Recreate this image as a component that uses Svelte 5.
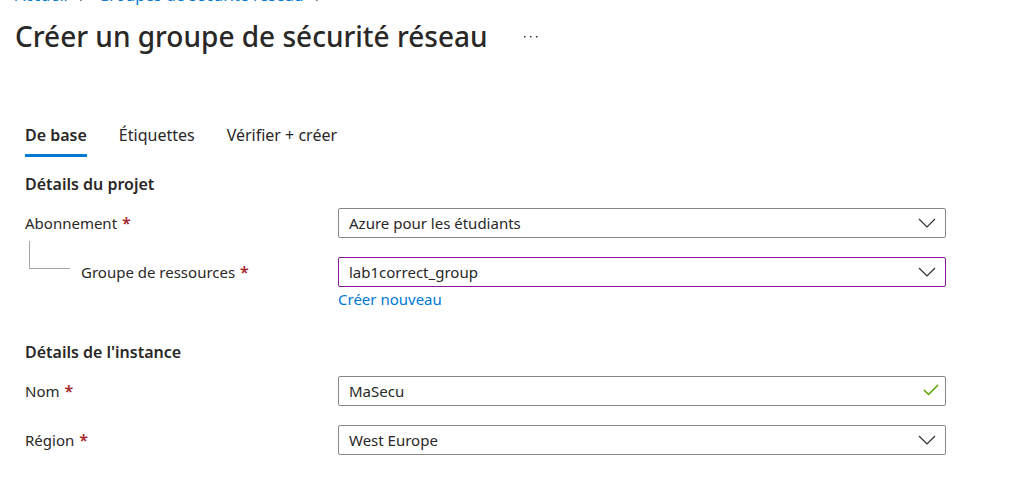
<script>
  let subscription = $state('Azure pour les étudiants');
  let group = $state('lab1correct_group');
  let name = $state('MaSecu');
  let region = $state('West Europe');
  let active = $state(0);
  const tabs = ['De base', 'Étiquettes', 'Vérifier + créer'];
</script>

{#snippet chevron()}
  <svg class="chevron" viewBox="0 0 18 10" width="18" height="10" aria-hidden="true">
    <path d="M1 1 L9 9 L17 1" />
  </svg>
{/snippet}

<main>
  <nav class="crumbs">
    <a href="#accueil">Accueil</a><span>/</span><a href="#groupes">Groupes de sécurité réseau</a><span>/</span>
  </nav>

  <header>
    <h1>Créer un groupe de sécurité réseau</h1>
    <button class="more" type="button" aria-label="Plus">
      <svg viewBox="0 0 16 4" width="16" height="4" aria-hidden="true">
        <rect x="1" y="1" width="1.5" height="1.5" /><rect x="7" y="1" width="1.5" height="1.5" /><rect x="13" y="1" width="1.5" height="1.5" />
      </svg>
    </button>
  </header>

  <div class="tabs" role="tablist">
    {#each tabs as tab, i}
      <button type="button" role="tab" aria-selected={active === i} class:active={active === i} onclick={() => (active = i)}>{tab}</button>
    {/each}
  </div>

  <form>
    <section>
      <h2>Détails du projet</h2>
      <div class="row">
        <label for="subscription">Abonnement <span class="req">*</span></label>
        <div class="field">
          <select id="subscription" bind:value={subscription}><option>Azure pour les étudiants</option></select>
          {@render chevron()}
        </div>
      </div>
      <div class="row">
        <div class="child">
          <span class="branch"></span>
          <label for="group">Groupe de ressources <span class="req">*</span></label>
        </div>
        <div class="field">
          <select id="group" class="changed" bind:value={group}><option>lab1correct_group</option></select>
          {@render chevron()}
        </div>
        <a class="create" href="#nouveau">Créer nouveau</a>
      </div>
    </section>

    <section>
      <h2>Détails de l'instance</h2>
      <div class="row">
        <label for="name">Nom <span class="req">*</span></label>
        <div class="field">
          <input id="name" type="text" bind:value={name} />
          <svg class="check" viewBox="0 0 16 12" width="16" height="12" aria-hidden="true">
            <path d="M1 6 L5.5 10.5 L15 1" />
          </svg>
        </div>
      </div>
      <div class="row">
        <label for="region">Région <span class="req">*</span></label>
        <div class="field">
          <select id="region" bind:value={region}><option>West Europe</option></select>
          {@render chevron()}
        </div>
      </div>
    </section>
  </form>
</main>

<style>
  :global(body) {
    margin: 0;
    background: #fff;
  }
  main {
    font-family: "Segoe UI", "Noto Sans", "Open Sans", sans-serif;
    font-size: 15px;
    line-height: 20px;
    color: #292827;
  }
  a {
    color: #0078d4;
    text-decoration: none;
  }
  .crumbs {
    display: flex;
    align-items: flex-end;
    gap: 12px;
    height: 5px;
    padding-left: 15px;
    overflow: hidden;
    font-size: 16px;
    color: #605e5c;
  }
  header {
    display: flex;
    align-items: center;
    gap: 35px;
    height: 64px;
    padding: 0 15px;
    box-sizing: border-box;
  }
  h1 {
    margin: 0;
    padding-bottom: 2px;
    font-size: 28px;
    line-height: 40px;
    font-weight: 500;
  }
  button {
    border: 0;
    padding: 0;
    background: none;
    font: inherit;
    color: inherit;
    cursor: pointer;
  }
  .more {
    display: flex;
  }
  .more rect {
    fill: #323130;
  }
  .tabs {
    display: flex;
    gap: 32px;
    margin-top: 54px;
    padding: 0 25px;
  }
  .tabs button {
    height: 34px;
    padding-bottom: 8px;
    border-bottom: 3px solid transparent;
    font-size: 16px;
    line-height: 20px;
    white-space: nowrap;
  }
  .tabs .active {
    border-color: #0078d4;
    font-weight: 600;
  }
  form {
    padding: 16px 66px 24px 25px;
  }
  section {
    display: flex;
    flex-direction: column;
    gap: 19px;
  }
  section + section {
    margin-top: 32px;
  }
  h2 {
    margin: 0 0 -6px;
    font-size: 16px;
    line-height: 22px;
    font-weight: 600;
  }
  .row {
    display: grid;
    grid-template-columns: 313px minmax(0, 1fr);
    align-items: center;
  }
  .req {
    margin-left: 1px;
    color: #a4262c;
    font-size: 16px;
    line-height: 16px;
    font-weight: 600;
  }
  .child {
    display: flex;
    align-items: center;
    gap: 11px;
    padding-left: 4px;
  }
  .branch {
    width: 40px;
    height: 27px;
    margin-top: -34px;
    border: solid #a6a6a6;
    border-width: 0 0 1px 1px;
  }
  .field {
    display: grid;
    align-items: center;
  }
  .field > * {
    grid-area: 1 / 1;
  }
  select,
  input {
    appearance: none;
    box-sizing: border-box;
    width: 100%;
    height: 30px;
    margin: 0;
    padding: 0 40px 0 10px;
    border: 1px solid #8a8886;
    border-radius: 2px;
    outline: 0;
    background: #fff;
    font: inherit;
    color: inherit;
  }
  .changed {
    border-color: #881798;
  }
  .chevron,
  .check {
    justify-self: end;
    fill: none;
    pointer-events: none;
  }
  .chevron {
    margin-right: 10px;
    stroke: #323130;
    stroke-width: 1.2;
  }
  .check {
    margin-right: 7px;
    stroke: #57a300;
    stroke-width: 1.5;
    padding-bottom: 3px;
  }
  .create {
    grid-column: 2;
    justify-self: start;
    margin-top: 2px;
  }
</style>
